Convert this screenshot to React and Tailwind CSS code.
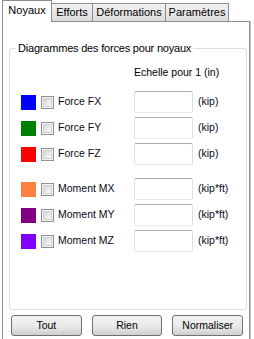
import React from "react";

const rows1 = [
  { color: "bg-[#0000ff]", label: "Force FX", unit: "(kip)" },
  { color: "bg-[#008000]", label: "Force FY", unit: "(kip)" },
  { color: "bg-[#ff0000]", label: "Force FZ", unit: "(kip)" },
];
const rows2 = [
  { color: "bg-[#ff8040]", label: "Moment MX", unit: "(kip*ft)" },
  { color: "bg-[#800080]", label: "Moment MY", unit: "(kip*ft)" },
  { color: "bg-[#8000ff]", label: "Moment MZ", unit: "(kip*ft)" },
];

function Check() {
  return (
    <div className="w-[13px] h-[13px] border border-[#8f8f8f] bg-[#f4f4f4] p-[1px] shrink-0">
      <div className="w-full h-full border border-[#d0d0d0] bg-gradient-to-br from-[#d8d8d8] to-[#fafafa]" />
    </div>
  );
}

function Row({ r }) {
  return (
    <div className="flex items-center h-[22px] pl-[11px]">
      <div className={`w-[15px] h-[15px] shrink-0 ${r.color}`} />
      <div className="ml-[5px]">
        <Check />
      </div>
      <span className="ml-[4px] w-[76px] text-[#0a0a14]">{r.label}</span>
      <div className="w-[59px] h-[22px] rounded-[2px] border border-[#dbdfe6] border-t-[#abadb3] border-b-[#e3e9ef] bg-white" />
      <span className="ml-[5px] text-[#0a0a14]">{r.unit}</span>
    </div>
  );
}

function Btn({ children }) {
  return (
    <button className="w-[72px] h-[21px] rounded-[3px] border border-[#707070] bg-gradient-to-b from-[#f2f2f2] via-[#ebebeb] to-[#cfcfcf] text-black leading-[19px]">
      {children}
    </button>
  );
}

export default function App() {
  return (
    <div className="w-[254px] h-[339px] bg-white overflow-hidden font-['Liberation_Sans',Arial,sans-serif] text-[10.5px] text-black">
      {/* tab strip */}
      <div className="flex items-end h-[21px] pl-[2px] relative z-10 text-[11px]">
        <div className="w-[50px] h-[22px] -mb-[1px] border border-b-0 border-[#898c95] bg-white flex items-center justify-center pb-[2px]">
          Noyaux
        </div>
        <div className="w-[41px] h-[18px] border-t border-r border-[#898c95] bg-gradient-to-b from-[#f2f2f2] to-[#dcdcdc] flex items-center justify-center">
          Efforts
        </div>
        <div className="w-[73px] h-[18px] border-t border-r border-[#898c95] bg-gradient-to-b from-[#f2f2f2] to-[#dcdcdc] flex items-center justify-center">
          Déformations
        </div>
        <div className="w-[63px] h-[18px] border-t border-r border-[#898c95] bg-gradient-to-b from-[#f2f2f2] to-[#dcdcdc] flex items-center justify-center">
          Paramètres
        </div>
      </div>
      {/* panel */}
      <div className="ml-[2px] w-[248px] h-[330px] border border-[#898c95] bg-white shadow-[1px_0_0_#c8c8c8] pt-[26px] px-[6px]">
        <div className="relative w-[238px] h-[262px] rounded-[3px] border border-[#d5dfe5]">
          <span className="absolute -top-[7px] left-[6px] bg-white px-[2px] leading-[13px] text-[11px] tracking-[-0.2px]">
            Diagrammes des forces pour noyaux
          </span>
          <div className="pt-[17px] pl-[124px] leading-[13px]">Echelle pour 1 (in)</div>
          <div className="mt-[12px] flex flex-col gap-[4px]">
            {rows1.map((r) => (
              <Row key={r.label} r={r} />
            ))}
          </div>
          <div className="mt-[13px] flex flex-col gap-[4px]">
            {rows2.map((r) => (
              <Row key={r.label} r={r} />
            ))}
          </div>
        </div>
        <div className="mt-[5px] pl-[2px] flex gap-[10px]">
          <Btn>Tout</Btn>
          <Btn>Rien</Btn>
          <Btn>Normaliser</Btn>
        </div>
      </div>
    </div>
  );
}
